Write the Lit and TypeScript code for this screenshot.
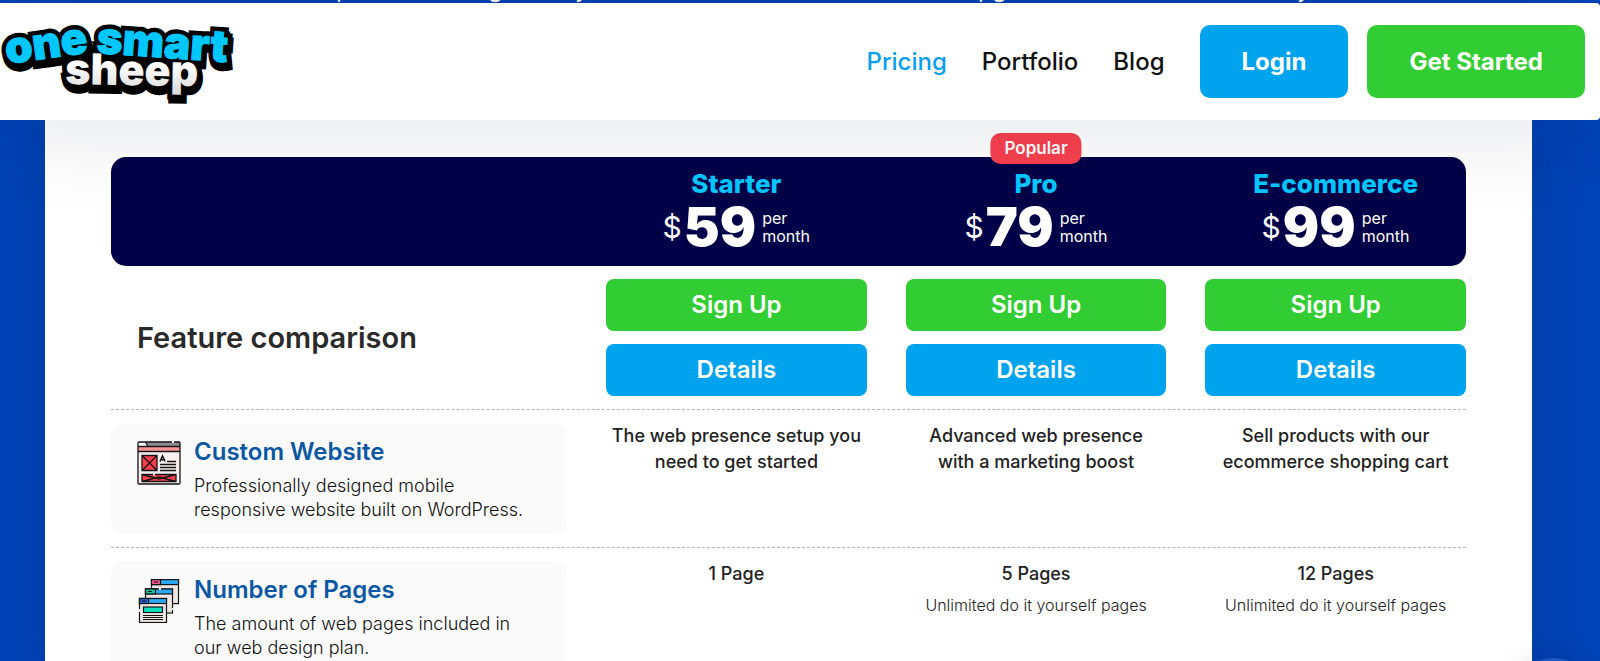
import { LitElement, html, css, svg } from "lit";
import { customElement } from "lit/decorators.js";

interface Plan {
  name: string;
  price: number;
  popular?: boolean;
}

interface Feature {
  icon: unknown;
  title: string;
  text: string;
  values: { main: string; note?: string }[];
}

const plans: Plan[] = [
  { name: "Starter", price: 59 },
  { name: "Pro", price: 79, popular: true },
  { name: "E-commerce", price: 99 },
];

const layoutIcon = svg`
  <svg class="icon" viewBox="0 0 44 44" aria-hidden="true">
    <rect x="1" y="1" width="42" height="42" rx="1" fill="#f7eff0"/>
    <rect x="1" y="1" width="42" height="5" fill="#8c8e92"/>
    <path d="M1 1H9L11 6H1Z" fill="#fff"/>
    <rect x="1" y="6" width="42" height="5" fill="#ff9299"/>
    <rect x="5" y="14.500" width="15" height="15" fill="#fb3e4c"/>
    <rect x="5" y="33.500" width="34" height="7" fill="#fb3e4c"/>
    <g fill="none" stroke="#151515" stroke-width="1.300">
      <rect x="1" y="1" width="42" height="42" rx="1"/>
      <path d="M1 5.500H43M1 10.500H43M8.500 1L11 5.500"/>
      <path d="M5 14.500H20V29.500H5ZM5 14.500L20 29.500M20 14.500L5 29.500"/>
      <path d="M5 33.500H39V40.500H5ZM5 33.500L22 38L39 33.500M5 40.500L22 36L39 40.500"/>
      <path d="M30 20.500H39M23 23.500H39M23 26.500H39M23 29.500H39"/>
      <path d="M23 20.500L25.500 15L28 20.500M24 18.800H27" stroke-width="1.600"/>
    </g>
    <path d="M35 0H37V2H35ZM16 32.500H18V34.500H16Z" fill="#f7eff0"/>
  </svg>`;

const pagesIcon = svg`
  <svg class="icon" viewBox="0 0 44 44" aria-hidden="true">
    <g stroke="#151515" stroke-width="1.200">
      <rect x="14.500" y=".6" width="27" height="24" fill="#efe7e6"/>
      <rect x="14.500" y=".6" width="27" height="5" fill="#2aa9f2"/>
      <rect x="14.500" y=".6" width="9" height="5" fill="#f0568c"/>
      <rect x="8.500" y="10" width="27" height="24" fill="#efe7e6"/>
      <rect x="8.500" y="10" width="27" height="5" fill="#2aa9f2"/>
      <rect x="8.500" y="10" width="10" height="5" fill="#0fc29b"/>
      <rect x="2.500" y="19.500" width="27" height="24" fill="#efe7e6"/>
      <rect x="2.500" y="19.500" width="27" height="5" fill="#2aa9f2"/>
      <rect x="2.500" y="19.500" width="9" height="5" fill="#2563d6"/>
      <rect x="6.500" y="28" width="19" height="5.500" fill="#0be0c0"/>
      <path d="M6 36.500H26M6 38.500H26M6 40.500H26M17 3H21M11 12.500H15M5 22H9"/>
    </g>
    <path d="M22 9H24V11H22ZM1.500 30H3.500V33H1.500ZM34.500 29H36.500V31H34.500Z" fill="#fafafa"/>
  </svg>`;

const features: Feature[] = [
  {
    icon: layoutIcon,
    title: "Custom Website",
    text: "Professionally designed mobile responsive website built on WordPress.",
    values: [
      { main: "The web presence setup you need to get started" },
      { main: "Advanced web presence with a marketing boost" },
      { main: "Sell products with our ecommerce shopping cart" },
    ],
  },
  {
    icon: pagesIcon,
    title: "Number of Pages",
    text: "The amount of web pages included in our web design plan.",
    values: [
      { main: "1 Page" },
      { main: "5 Pages", note: "Unlimited do it yourself pages" },
      { main: "12 Pages", note: "Unlimited do it yourself pages" },
    ],
  },
];

@customElement("site-header")
class SiteHeader extends LitElement {
  static styles = css`
    :host {
      display: block;
      position: relative;
      z-index: 2;
      background: #fff;
      border-radius: 0 4px 4px 0;
      box-shadow: 0 0 100px rgba(10, 20, 50, 0.14);
    }
    .bar {
      display: flex;
      align-items: center;
      justify-content: space-between;
      padding: 22px 15px 22px 0;
    }
    .logo {
      display: block;
    }
    .mark {
      display: block;
      width: 240px;
      height: 73px;
      overflow: visible;
    }
    .word {
      font-family: Inter, "Open Sans", sans-serif;
      font-weight: 900;
    }
    .edge {
      fill: #000;
      stroke: #000;
      stroke-width: 10px;
      stroke-linejoin: miter;
      stroke-miterlimit: 2;
    }
    .blue {
      fill: #00c8ff;
      stroke: #00c8ff;
    }
    .white {
      fill: url(#fade);
    }
    .nav {
      display: flex;
      align-items: center;
    }
    .link {
      margin-right: 35px;
      font-size: 24px;
      font-weight: 500;
      color: #111;
      text-decoration: none;
    }
    .link.current {
      color: #089fed;
    }
    .button {
      display: flex;
      align-items: center;
      height: 73px;
      padding: 0 42px;
      border-radius: 10px;
      font-size: 24px;
      font-weight: 700;
      color: #fff;
      text-decoration: none;
      background: #00a3ee;
    }
    .button.start {
      margin-left: 19px;
      background: #32cd32;
    }
  `;

  render() {
    const words = (blue: string, white: string) => svg`
      <text class=${blue} transform="translate(7 64) rotate(-8)" font-size="44">one</text>
      <text class=${blue} transform="translate(96 53) rotate(4)" font-size="44">smart</text>
      <text class=${white} transform="translate(65 84) rotate(1)" font-size="43">sheep</text>
    `;
    return html`
      <header class="bar">
        <a class="logo" href="#" aria-label="One Smart Sheep">
          <svg class="mark" viewBox="0 25 240 73">
            <defs>
              <linearGradient id="fade" x1="0" y1="0" x2="0" y2="1">
                <stop offset="0.4" stop-color="#fff" />
                <stop offset="1" stop-color="#d8d8d8" />
              </linearGradient>
            </defs>
            <g class="word edge" aria-hidden="true">${words("", "")}</g>
            <g class="word edge" aria-hidden="true" transform="translate(1 4)">
              ${words("", "")}
            </g>
            <g class="word">${words("blue", "white")}</g>
          </svg>
        </a>
        <nav class="nav">
          <a class="link current" href="#pricing" aria-current="page">Pricing</a>
          <a class="link" href="#portfolio">Portfolio</a>
          <a class="link" href="#blog">Blog</a>
          <a class="button" href="#login">Login</a>
          <a class="button start" href="#start">Get Started</a>
        </nav>
      </header>
    `;
  }
}

@customElement("plan-table")
class PlanTable extends LitElement {
  static styles = css`
    :host {
      display: block;
    }
    .table,
    .head,
    .body {
      display: block;
    }
    .row {
      display: grid;
      grid-template-columns: minmax(0, 7fr) repeat(3, minmax(0, 4fr));
      column-gap: 39px;
      padding: 13px 0;
      border-bottom: 1px dashed #b4b4b4;
    }
    .cell {
      display: block;
      padding: 0;
      text-align: center;
      font-weight: 400;
    }
    .row.plans {
      padding: 0;
      border: 0;
      border-radius: 15px;
      background: #000048;
    }
    .plan {
      position: relative;
      padding: 11px 0 13px;
      color: #fff;
    }
    .badge {
      position: absolute;
      top: -24px;
      left: 50%;
      transform: translateX(-50%);
      padding: 0 14px;
      border-radius: 10px;
      background: #f8404f;
      font-size: 17px;
      line-height: 31px;
      font-weight: 600;
    }
    .name {
      display: block;
      margin-bottom: 1px;
      font-size: 26px;
      line-height: 32px;
      font-weight: 800;
      color: #00c8ff;
    }
    .price {
      display: flex;
      align-items: center;
      justify-content: center;
      gap: 2px;
      line-height: 52px;
    }
    .sign {
      font-size: 30px;
      font-weight: 400;
    }
    .amount {
      font-size: 54px;
      font-weight: 900;
    }
    .period {
      margin-left: 4px;
      width: 48px;
      text-align: left;
      font-size: 16px;
      line-height: 18px;
      font-weight: 400;
    }
    .heading {
      align-self: center;
      padding-left: 26px;
      text-align: left;
      font-size: 29px;
      line-height: 36px;
      font-weight: 600;
      color: #2a2a2a;
    }
    .actions {
      display: grid;
      gap: 13px;
    }
    .action {
      border-radius: 8px;
      font-size: 24px;
      line-height: 52px;
      font-weight: 600;
      color: #fff;
      text-decoration: none;
      background: #00a3ee;
    }
    .action.signup {
      background: #32cd32;
    }
    .feature {
      display: flex;
      gap: 13px;
      padding: 17px 26px 12px;
      border-radius: 12px;
      background: #fafafa;
      text-align: left;
    }
    .icon {
      flex: none;
      width: 44px;
      height: 44px;
      margin-top: 1px;
    }
    .title {
      margin: 0 0 10px;
      font-size: 24px;
      line-height: 24px;
      font-weight: 600;
      color: #0a57a4;
    }
    .text {
      margin: 0;
      font-size: 18px;
      line-height: 24px;
      font-weight: 300;
      color: #111;
    }
    .value {
      padding: 0 4px;
      color: #222;
    }
    .main {
      margin: 0;
      font-size: 18px;
      line-height: 26px;
      font-weight: 500;
    }
    .note {
      margin: 6px 0 0;
      font-size: 16px;
      line-height: 24px;
      font-weight: 300;
    }
  `;

  render() {
    return html`
      <table class="table" role="table" aria-label="Plans and features">
        <thead class="head" role="rowgroup">
          <tr class="row plans" role="row">
            <td class="cell" role="cell"></td>
            ${plans.map(
              (p) => html`
                <th class="cell plan" role="columnheader" scope="col">
                  ${p.popular ? html`<span class="badge">Popular</span>` : null}
                  <span class="name">${p.name}</span>
                  <span class="price">
                    <span class="sign">$</span>
                    <span class="amount">${p.price}</span>
                    <span class="period">per month</span>
                  </span>
                </th>
              `
            )}
          </tr>
        </thead>
        <tbody class="body" role="rowgroup">
          <tr class="row" role="row">
            <th class="cell heading" role="rowheader" scope="row">Feature comparison</th>
            ${plans.map(
              () => html`
                <td class="cell actions" role="cell">
                  <a class="action signup" href="#signup">Sign Up</a>
                  <a class="action" href="#details">Details</a>
                </td>
              `
            )}
          </tr>
          ${features.map(
            (f) => html`
              <tr class="row" role="row">
                <th class="cell feature" role="rowheader" scope="row">
                  ${f.icon}
                  <div>
                    <h3 class="title">${f.title}</h3>
                    <p class="text">${f.text}</p>
                  </div>
                </th>
                ${f.values.map(
                  (v) => html`
                    <td class="cell value" role="cell">
                      <p class="main">${v.main}</p>
                      ${v.note ? html`<p class="note">${v.note}</p>` : null}
                    </td>
                  `
                )}
              </tr>
            `
          )}
        </tbody>
      </table>
    `;
  }
}

@customElement("app-root")
class AppRoot extends LitElement {
  static styles = css`
    :host {
      display: block;
      height: 100vh;
      overflow: hidden;
      position: relative;
      font-family: Inter, "Open Sans", sans-serif;
      background: #0043b8;
    }
    .hero {
      display: block;
      width: 100%;
      height: 3px;
    }
    .tail {
      font-size: 24px;
      fill: #fff;
    }
    .panel {
      margin: 0 68px 0 45px;
      padding: 37px 66px 0;
      background: #fff;
      box-shadow: 0 0 50px rgba(10, 40, 90, 0.25);
    }
    .chat {
      position: absolute;
      right: 1px;
      bottom: -87px;
      width: 90px;
      height: 90px;
      padding: 0;
      border: 0;
      border-radius: 50%;
      background: #1d58c4;
      box-shadow: 0 0 30px rgba(0, 0, 0, 0.12);
    }
  `;

  render() {
    return html`
      <svg class="hero" aria-hidden="true">
        <text class="tail" y="-3" x="336 488 575 978 992 1297">pgypgy</text>
      </svg>
      <site-header></site-header>
      <main class="panel">
        <plan-table></plan-table>
      </main>
      <button class="chat" aria-label="Open chat"></button>
    `;
  }
}
